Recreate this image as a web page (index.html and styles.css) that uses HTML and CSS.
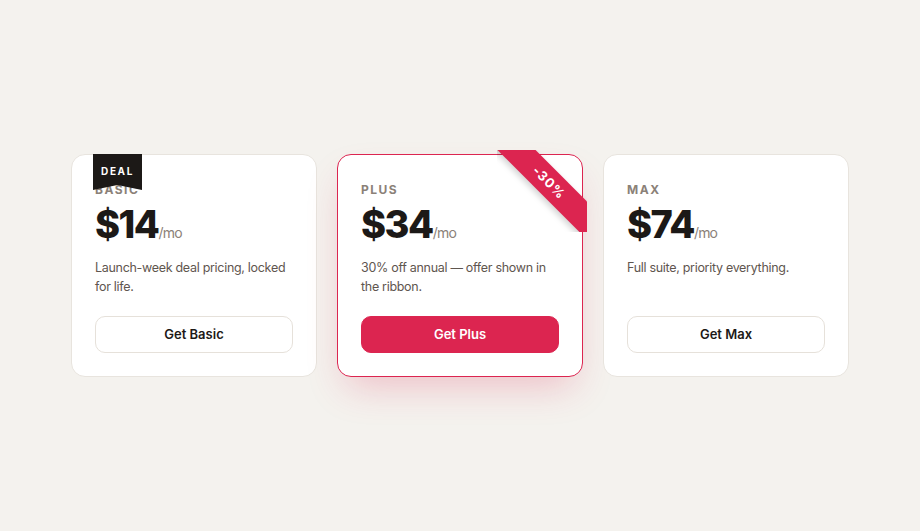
FILE: index.html
```html
<!DOCTYPE HTML>
<html>
<head>
<meta charset="utf-8">
<title>Pricing</title>
<link rel="stylesheet" href="styles.css">
</head>

<body>
<div class="plans">
	<div class="plan">
		<span class="deal">DEAL</span>
		<p class="plan-name">BASIC</p>
		<p class="price">$14<span>/mo</span></p>
		<p class="desc">Launch-week deal pricing, locked for life.</p>
		<a href="javascript:;" class="btn">Get Basic</a>
	</div>
	<div class="plan plan-hot">
		<div class="ribbon"><span>-30%</span></div>
		<p class="plan-name">PLUS</p>
		<p class="price">$34<span>/mo</span></p>
		<p class="desc">30% off annual — offer shown in the ribbon.</p>
		<a href="javascript:;" class="btn btn-red">Get Plus</a>
	</div>
	<div class="plan">
		<p class="plan-name">MAX</p>
		<p class="price">$74<span>/mo</span></p>
		<p class="desc">Full suite, priority everything.</p>
		<a href="javascript:;" class="btn">Get Max</a>
	</div>
</div>
</body>
</html>
```

FILE: styles.css
```css
* {margin:0; padding:0; box-sizing:border-box;}

body {
	height:100vh;
	display:flex;
	align-items:center;
	justify-content:center;
	background:#f4f2ee;
	font-family:Inter, "Liberation Sans", sans-serif;
	color:#1c1917;
}

.plans {
	display:flex;
	gap:20px;
}

.plan {
	position:relative;
	width:246px;
	display:flex;
	flex-direction:column;
	padding:27px 23px 23px;
	background:#fff;
	border:1px solid #e8e4de;
	border-radius:14px;
}
.plan-hot {
	border-color:#dc2550;
	box-shadow:0 18px 38px -10px rgba(220,37,80,0.26);
}

.plan-name {
	font-size:12px;
	line-height:16px;
	font-weight:700;
	letter-spacing:1.5px;
	color:#8b8178;
}

.price {
	margin-top:7px;
	font-size:38px;
	line-height:38px;
	font-weight:800;
	letter-spacing:-1.5px;
}
.price span {
	font-size:14px;
	font-weight:400;
	letter-spacing:-0.8px;
	color:#8b8178;
}

.desc {
	margin:6px 0 20px;
	font-size:12.5px;
	line-height:19px;
	letter-spacing:-0.3px;
	color:#5f564f;
}

.btn {
	margin-top:auto;
	display:block;
	height:37px;
	line-height:35px;
	text-align:center;
	font-size:13px;
	font-weight:600;
	color:#1c1917;
	text-decoration:none;
	border:1px solid #e6e1da;
	border-radius:10px;
}
.btn-red {
	background:#dc2550;
	border-color:#dc2550;
	color:#fff;
}

/* corner tags */
.deal {
	position:absolute;
	top:-1px;
	left:21px;
	width:49px;
	height:36px;
	padding-top:11px;
	background:#1c1917;
	color:#fff;
	font-size:10px;
	font-weight:700;
	letter-spacing:1.6px;
	text-align:center;
	clip-path:polygon(0 0, 100% 0, 100% 100%, 50% 86%, 0 100%);
}

.ribbon {
	position:absolute;
	top:-5px;
	right:-5px;
	width:90px;
	height:82px;
	overflow:hidden;
	z-index:1;
}
.ribbon span {
	position:absolute;
	left:-13px;
	top:19px;
	width:130px;
	height:27px;
	line-height:27px;
	text-align:center;
	background:#dc2550;
	color:#fff;
	font-size:13px;
	font-weight:700;
	letter-spacing:1px;
	transform:rotate(45deg);
	box-shadow:0 3px 6px rgba(0,0,0,0.18);
}
.ribbon:after {
	content:"";
	position:absolute;
	right:0;
	bottom:0;
	border-top:5px solid #7c1530;
	border-right:5px solid transparent;
	z-index:-1;
}
```
